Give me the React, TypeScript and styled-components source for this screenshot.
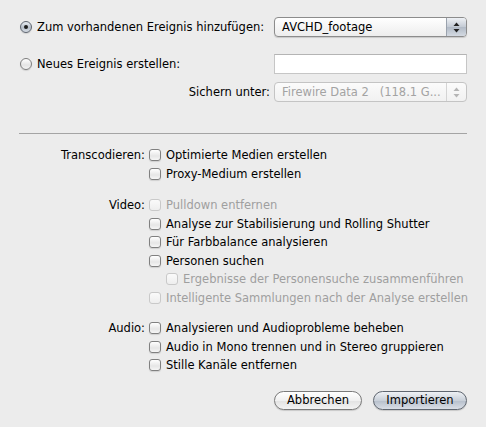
import React from "react";
import styled, { createGlobalStyle, css } from "styled-components";

const GlobalStyle = createGlobalStyle`
  html, body {
    margin: 0;
    padding: 0;
    background: #ececec;
  }
  body {
    font-family: "DejaVu Sans", "Liberation Sans", sans-serif;
    font-size: 11.5px;
    color: #000;
  }
`;

const Dialog = styled.div`
  width: 486px;
  height: 427px;
  box-sizing: border-box;
  padding: 17px 19px 0 19px;
  background: #ececec;
`;

const FormRow = styled.div<{ $gap?: number }>`
  display: grid;
  grid-template-columns: 1fr 193px;
  column-gap: 4px;
  align-items: center;
  margin-top: ${(p) => p.$gap ?? 0}px;
`;

const RadioLabel = styled.label`
  display: flex;
  align-items: center;
  gap: 5px;
  padding-left: 1px;
  white-space: nowrap;
`;

const Radio = styled.span<{ $on?: boolean }>`
  width: 12px;
  height: 12px;
  box-sizing: border-box;
  border-radius: 50%;
  border: 1px solid #7d7d7d;
  display: flex;
  align-items: center;
  justify-content: center;
  flex-shrink: 0;
  box-shadow: 0 1px 1px rgba(0, 0, 0, 0.12);
  background: linear-gradient(#ffffff, #e4e4e4 60%, #f4f4f4);
  ${(p) =>
    p.$on &&
    css`
      border-color: #5e6570;
      background: linear-gradient(#e9edf2, #b7c0cb 55%, #d6dce4);
      &::after {
        content: "";
        width: 4px;
        height: 4px;
        border-radius: 50%;
        background: #1c1c1c;
      }
    `}
`;

const FieldLabel = styled.span`
  text-align: right;
  white-space: nowrap;
`;

const Popup = styled.div<{ $disabled?: boolean }>`
  height: 20px;
  box-sizing: border-box;
  display: flex;
  align-items: stretch;
  border: 1px solid ${(p) => (p.$disabled ? "#c4c4c4" : "#8c8c8c")};
  border-radius: 4px;
  background: ${(p) =>
    p.$disabled ? "linear-gradient(#fbfbfb, #f1f1f1)" : "linear-gradient(#ffffff, #ededed)"};
  color: ${(p) => (p.$disabled ? "#a3a3a3" : "#000")};
  box-shadow: ${(p) => (p.$disabled ? "none" : "0 1px 1px rgba(0,0,0,0.15)")};
  overflow: hidden;
`;

const PopupText = styled.span`
  flex: 1;
  padding-left: 7px;
  display: flex;
  align-items: center;
  white-space: pre;
  overflow: hidden;
`;

const Stepper = styled.span<{ $disabled?: boolean }>`
  width: 19px;
  display: flex;
  align-items: center;
  justify-content: center;
  border-left: 1px solid ${(p) => (p.$disabled ? "#d4d4d4" : "#9aa2ad")};
  background: ${(p) =>
    p.$disabled ? "transparent" : "linear-gradient(#eef1f5, #c3cad4 50%, #b1bac6 51%, #d4dae2)"};
`;

const TextField = styled.div`
  height: 20px;
  box-sizing: border-box;
  background: #fff;
  border: 1px solid #c6c6c6;
  border-top-color: #b4b4b4;
`;

const Divider = styled.hr`
  margin: 31px 0 0 0;
  border: none;
  border-top: 1px solid #a4a4a4;
  height: 0;
`;

const Group = styled.div<{ $gap: number }>`
  display: grid;
  grid-template-columns: 126px 1fr;
  column-gap: 4px;
  margin-top: ${(p) => p.$gap}px;
`;

const GroupLabel = styled.span`
  text-align: right;
  height: 18.5px;
  display: flex;
  align-items: center;
  justify-content: flex-end;
  white-space: nowrap;
`;

const Items = styled.div`
  display: flex;
  flex-direction: column;
`;

const Item = styled.label<{ $indent?: boolean; $disabled?: boolean }>`
  height: 18.5px;
  display: flex;
  align-items: center;
  gap: 5px;
  padding-left: ${(p) => (p.$indent ? 17 : 0)}px;
  color: ${(p) => (p.$disabled ? "#9f9f9f" : "#000")};
  white-space: nowrap;
`;

const Box = styled.span<{ $disabled?: boolean }>`
  width: 12px;
  height: 12px;
  box-sizing: border-box;
  border-radius: 3px;
  flex-shrink: 0;
  border: 1px solid ${(p) => (p.$disabled ? "#c9c9c9" : "#808080")};
  background: ${(p) =>
    p.$disabled ? "linear-gradient(#fafafa, #eeeeee)" : "linear-gradient(#ffffff, #e6e6e6 60%, #f6f6f6)"};
  box-shadow: ${(p) => (p.$disabled ? "none" : "0 1px 1px rgba(0,0,0,0.12)")};
`;

const Buttons = styled.div`
  display: flex;
  justify-content: flex-end;
  gap: 11px;
  margin-top: 16px;
`;

const Button = styled.button<{ $default?: boolean; $w: number }>`
  width: ${(p) => p.$w}px;
  height: 19px;
  padding: 0;
  font: inherit;
  color: #000;
  border-radius: 10px;
  border: 1px solid ${(p) => (p.$default ? "#5f6670" : "#7a7a7a")};
  background: ${(p) =>
    p.$default
      ? "linear-gradient(#eef1f5, #c9d0d9 50%, #b6bfcb 51%, #d9dee6)"
      : "linear-gradient(#ffffff, #f0f0f0 50%, #e2e2e2 51%, #f3f3f3)"};
  box-shadow: 0 1px 1px rgba(0, 0, 0, 0.15);
`;

function Arrows({ disabled }: { disabled?: boolean }) {
  const c = disabled ? "#b5b5b5" : "#222";
  return (
    <svg width="7" height="11" viewBox="0 0 7 11">
      <path d="M3.5 0.5 L6.5 4 L0.5 4 Z" fill={c} />
      <path d="M3.5 10.5 L6.5 7 L0.5 7 Z" fill={c} />
    </svg>
  );
}

type Opt = { text: string; indent?: boolean; disabled?: boolean };

const groups: { label: string; gap: number; items: Opt[] }[] = [
  {
    label: "Transcodieren:",
    gap: 12,
    items: [{ text: "Optimierte Medien erstellen" }, { text: "Proxy-Medium erstellen" }],
  },
  {
    label: "Video:",
    gap: 13,
    items: [
      { text: "Pulldown entfernen", disabled: true },
      { text: "Analyse zur Stabilisierung und Rolling Shutter" },
      { text: "Für Farbbalance analysieren" },
      { text: "Personen suchen" },
      { text: "Ergebnisse der Personensuche zusammenführen", indent: true, disabled: true },
      { text: "Intelligente Sammlungen nach der Analyse erstellen", disabled: true },
    ],
  },
  {
    label: "Audio:",
    gap: 12,
    items: [
      { text: "Analysieren und Audioprobleme beheben" },
      { text: "Audio in Mono trennen und in Stereo gruppieren" },
      { text: "Stille Kanäle entfernen" },
    ],
  },
];

export default function App() {
  return (
    <>
      <GlobalStyle />
      <Dialog>
        <FormRow>
          <RadioLabel>
            <Radio $on />
            Zum vorhandenen Ereignis hinzufügen:
          </RadioLabel>
          <Popup>
            <PopupText>AVCHD_footage</PopupText>
            <Stepper>
              <Arrows />
            </Stepper>
          </Popup>
        </FormRow>
        <FormRow $gap={17}>
          <RadioLabel>
            <Radio />
            Neues Ereignis erstellen:
          </RadioLabel>
          <TextField />
        </FormRow>
        <FormRow $gap={8}>
          <FieldLabel>Sichern unter:</FieldLabel>
          <Popup $disabled>
            <PopupText>{"Firewire Data 2   (118.1 G..."}</PopupText>
            <Stepper $disabled>
              <Arrows disabled />
            </Stepper>
          </Popup>
        </FormRow>

        <Divider />

        {groups.map((g) => (
          <Group key={g.label} $gap={g.gap}>
            <GroupLabel>{g.label}</GroupLabel>
            <Items>
              {g.items.map((it) => (
                <Item key={it.text} $indent={it.indent} $disabled={it.disabled}>
                  <Box $disabled={it.disabled} />
                  {it.text}
                </Item>
              ))}
            </Items>
          </Group>
        ))}

        <Buttons>
          <Button $w={88}>Abbrechen</Button>
          <Button $w={94} $default>
            Importieren
          </Button>
        </Buttons>
      </Dialog>
    </>
  );
}
